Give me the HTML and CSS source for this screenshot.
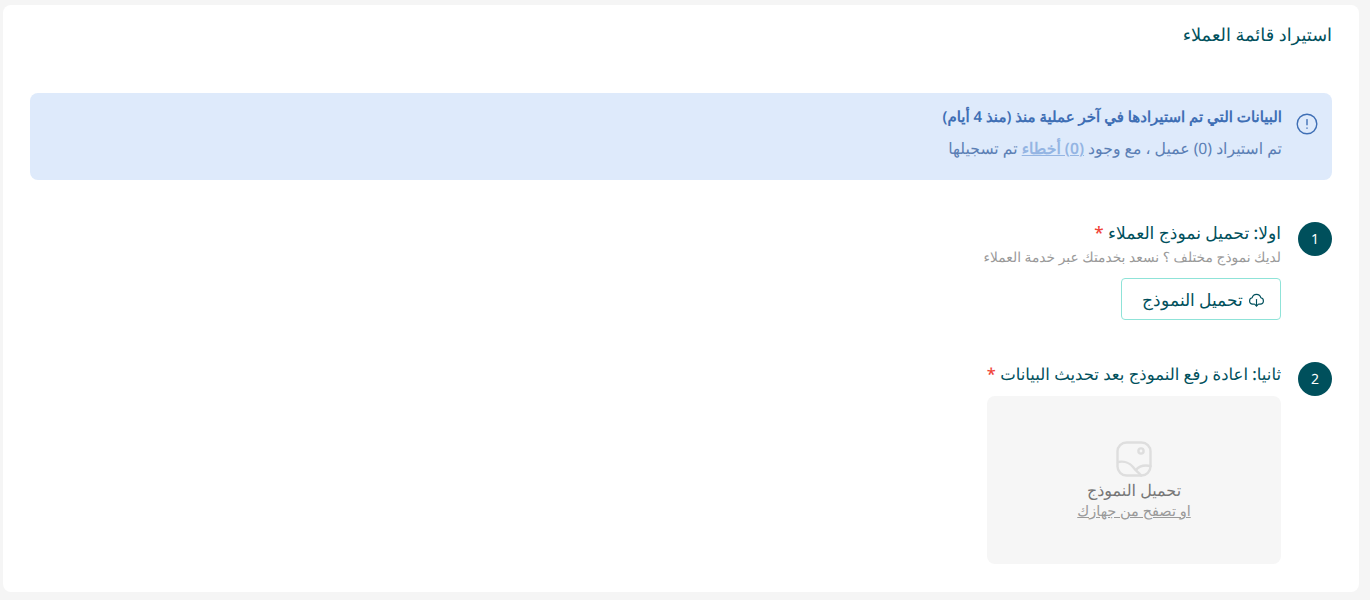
FILE: index.html
```html
<!DOCTYPE html>
<html lang="ar" dir="rtl">
<head>
  <meta charset="UTF-8">
  <title>استيراد قائمة العملاء</title>
  <link rel="stylesheet" href="styles.css">
</head>
<body>
  <main class="card">
    <h1 class="card-title">استيراد قائمة العملاء</h1>

    <div class="alert">
      <svg class="alert-icon" viewBox="0 0 22 22" width="22" height="22" fill="none" stroke="#3f6fb5" stroke-width="1.4" stroke-linecap="round">
        <circle cx="11" cy="11" r="9.8"/>
        <path d="M11 6.6v5.2"/>
        <path d="M11 15v.3"/>
      </svg>
      <div class="alert-body">
        <div class="alert-title">البيانات التي تم استيرادها في آخر عملية منذ (منذ 4 أيام)</div>
        <div class="alert-text">تم استيراد (0) عميل ، مع وجود <a href="#" class="alert-link">(0) أخطاء</a> تم تسجيلها</div>
      </div>
    </div>

    <section class="step step-first">
      <div class="step-num">1</div>
      <div class="step-body">
        <div class="step-title">اولا: تحميل نموذج العملاء <span class="req">*</span></div>
        <div class="step-hint">لديك نموذج مختلف ؟ نسعد بخدمتك عبر خدمة العملاء</div>
        <button class="btn-download">
          <svg viewBox="0 0 24 24" width="17" height="17" fill="none" stroke="#00505c" stroke-width="1.6" stroke-linecap="round" stroke-linejoin="round">
            <path d="M8 18.5H6.5a4.5 4.5 0 0 1-.7-8.9 6.4 6.4 0 0 1 12.4 0 4.5 4.5 0 0 1-.7 8.9H16"/>
            <path d="M12 12v9"/>
            <path d="M9.2 18.4l2.8 2.8 2.8-2.8"/>
          </svg>
          تحميل النموذج
        </button>
      </div>
    </section>

    <section class="step step-second">
      <div class="step-num">2</div>
      <div class="step-body">
        <div class="step-title">ثانيا: اعادة رفع النموذج بعد تحديث البيانات <span class="req">*</span></div>
        <div class="dropzone">
          <svg viewBox="0 0 36 36" width="36" height="36" fill="none" stroke="#dedede" stroke-width="2.4" stroke-linecap="round" stroke-linejoin="round">
            <rect x="1.5" y="1.5" width="33" height="33" rx="9"/>
            <circle cx="25" cy="10" r="2.6"/>
            <path d="M2 21c6-1 12 1 15 5s6 6 8 8.500"/>
            <path d="M20 29c3-4 9-5 14.500-4"/>
          </svg>
          <div class="drop-title">تحميل النموذج</div>
          <a href="#" class="drop-link">او تصفح من جهازك</a>
        </div>
      </div>
    </section>
  </main>
</body>
</html>
```

FILE: styles.css
```css
* {
  box-sizing: border-box;
}

body {
  margin: 0;
  height: 600px;
  overflow: hidden;
  padding: 5px 11px 8px 3px;
  background: #f5f5f5;
  font-family: "Noto Sans", sans-serif;
  color: #00505c;
  text-rendering: geometricPrecision;
}

.card {
  height: 587px;
  background: #fff;
  border-radius: 8px;
  padding: 18px 27px 0;
}

.card-title {
  margin: 0;
  font-size: 17.800px;
  font-weight: 500;
  line-height: 24px;
  color: #00505c;
}

.alert {
  display: flex;
  align-items: flex-start;
  gap: 14px;
  height: 87px;
  margin-top: 46px;
  padding: 12px 14px 0 0;
  background: #deeafb;
  border-radius: 8px;
}

.alert-icon {
  flex: none;
  margin-top: 8px;
}

.alert-title {
  font-size: 15px;
  font-weight: 600;
  line-height: 24px;
  color: #3f6fb5;
}

.alert-text {
  font-size: 15.700px;
  line-height: 24px;
  margin-top: 7px;
  color: #5b7fb5;
}

.alert-link {
  color: #94b5e3;
  font-weight: 600;
}

.step {
  display: flex;
  gap: 17px;
}

.step-first {
  margin-top: 42px;
}

.step-second {
  margin-top: 42px;
}

.step-num {
  flex: none;
  width: 34px;
  height: 34px;
  border-radius: 50%;
  background: #00505c;
  color: #fff;
  font-size: 14px;
  display: flex;
  align-items: center;
  justify-content: center;
}

.step-title {
  font-size: 16.500px;
  font-weight: 500;
  line-height: 24px;
}

.step-first .step-title {
  font-size: 17.100px;
}

.req {
  color: #f0453a;
}

.step-hint {
  font-size: 13.800px;
  line-height: 24px;
  color: #9a9a9a;
}

.btn-download {
  display: flex;
  align-items: center;
  gap: 5px;
  height: 42px;
  margin-top: 8px;
  padding: 0 15px 0 20px;
  background: #fff;
  border: 1px solid #8fe3d8;
  border-radius: 4px;
  font-family: inherit;
  font-size: 17px;
  font-weight: 500;
  color: #00505c;
}

.dropzone {
  width: 294px;
  height: 168px;
  margin-top: 10px;
  background: #f6f6f6;
  border-radius: 8px;
  display: flex;
  flex-direction: column;
  align-items: center;
  padding-top: 45px;
}

.drop-title {
  margin-top: 2px;
  font-size: 16px;
  line-height: 22px;
  color: #777;
}

.drop-link {
  font-size: 14.500px;
  line-height: 20px;
  color: #9a9a9a;
}
```
